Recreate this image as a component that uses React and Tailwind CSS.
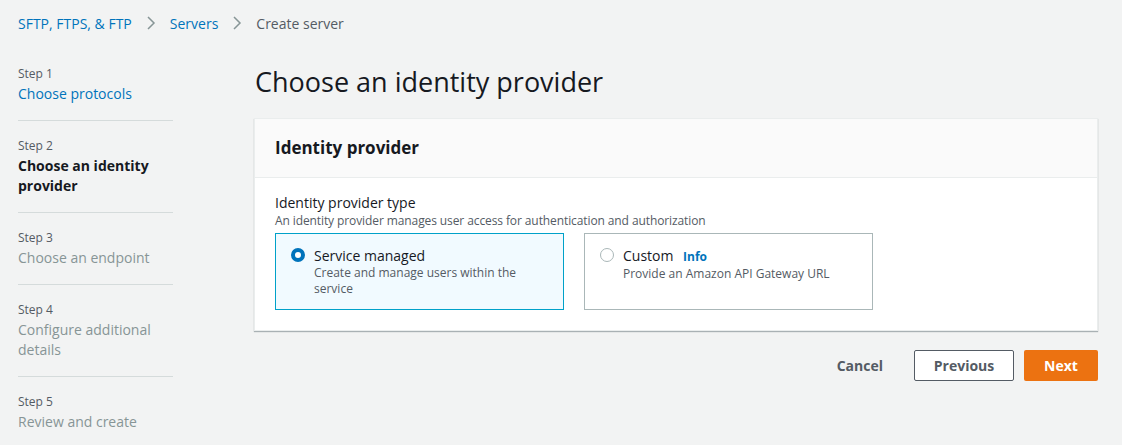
export default function App() {
  const steps = [
    { n: 1, title: "Choose protocols", state: "done" },
    { n: 2, title: "Choose an identity provider", state: "current" },
    { n: 3, title: "Choose an endpoint", state: "todo" },
    { n: 4, title: "Configure additional details", state: "todo" },
    { n: 5, title: "Review and create", state: "todo" },
  ];

  return (
    <div
      className="w-[1122px] h-[445px] bg-[#f2f3f3] text-[#16191f] overflow-hidden"
      style={{ fontFamily: '"Open Sans", "Noto Sans", Arial, sans-serif' }}
    >
      {/* breadcrumb */}
      <div className="flex items-center h-[46px] px-[18px] text-[14px]">
        <span className="text-[#0073bb]">SFTP, FTPS, &amp; FTP</span>
        <Chevron />
        <span className="text-[#0073bb]">Servers</span>
        <Chevron />
        <span className="text-[#545b64]">Create server</span>
      </div>

      <div className="flex">
        {/* steps */}
        <div className="w-[155px] ml-[18px] mt-[20px] shrink-0">
          {steps.map((s, i) => (
            <div
              key={s.n}
              className={`${i > 0 ? "border-t border-[#d5dbdb] pt-[17px]" : ""} ${
                i < steps.length - 1 ? "pb-[16px]" : ""
              }`}
            >
              <div className="text-[12px] leading-[16px] text-[#545b64]">Step {s.n}</div>
              <div
                className={`text-[14px] leading-[20px] mt-[2px] ${
                  s.state === "done"
                    ? "text-[#0073bb]"
                    : s.state === "current"
                    ? "font-bold text-[#16191f]"
                    : "text-[#879596]"
                }`}
              >
                {s.title}
              </div>
            </div>
          ))}
        </div>

        {/* main */}
        <div className="ml-[81px] w-[844px]">
          <h1 className="text-[27px] leading-[36px] mt-[18px] pl-[1px]">Choose an identity provider</h1>

          <div className="mt-[18px] bg-white border border-[#eaeded] shadow-[0_1px_1px_0_rgba(0,28,36,0.3)]">
            <div className="h-[59px] bg-[#fafafa] border-b border-[#eaeded] flex items-center px-[20px]">
              <h2 className="text-[17px] font-bold">Identity provider</h2>
            </div>
            <div className="px-[20px] pt-[16px] pb-[20px]">
              <div className="text-[14px] leading-[18px]">Identity provider type</div>
              <div className="text-[12px] leading-[16px] text-[#545b64] mt-[1px] tracking-[-0.1px]">
                An identity provider manages user access for authentication and authorization
              </div>
              <div className="flex gap-[20px] mt-[4px]">
                <div className="w-[289px] h-[77px] border border-[#00a1c9] bg-[#f1faff] flex pt-[13px] pl-[15px]">
                  <Radio checked />
                  <div className="ml-[9px]">
                    <div className="text-[14px] leading-[17px]">Service managed</div>
                    <div className="text-[12px] leading-[16px] text-[#545b64] mt-[1px] w-[220px]">
                      Create and manage users within the service
                    </div>
                  </div>
                </div>
                <div className="w-[289px] h-[77px] border border-[#aab7b8] bg-white flex pt-[13px] pl-[15px]">
                  <Radio />
                  <div className="ml-[9px]">
                    <div className="text-[14px] leading-[17px]">
                      Custom <span className="ml-[6px] text-[12px] font-bold text-[#0073bb]">Info</span>
                    </div>
                    <div className="text-[12px] leading-[16px] text-[#545b64] mt-[1px]">
                      Provide an Amazon API Gateway URL
                    </div>
                  </div>
                </div>
              </div>
            </div>
          </div>

          <div className="flex justify-end items-center mt-[19px] text-[14px] font-bold">
            <span className="text-[#545b64] mr-[31px]">Cancel</span>
            <button className="w-[100px] h-[31px] border border-[#545b64] bg-white text-[#545b64] rounded-[2px]">
              Previous
            </button>
            <button className="w-[74px] h-[31px] ml-[10px] bg-[#ec7211] text-white rounded-[2px]">
              Next
            </button>
          </div>
        </div>
      </div>
    </div>
  );
}

function Chevron() {
  return (
    <svg width="16" height="16" viewBox="0 0 16 16" className="mx-[11px]" fill="none">
      <path d="M5 2l6 6-6 6" stroke="#879596" strokeWidth="1.5" />
    </svg>
  );
}

function Radio({ checked }) {
  return (
    <div
      className={`mt-[1px] w-[14px] h-[14px] rounded-full shrink-0 ${
        checked ? "border-[4px] border-[#0073bb] bg-white" : "border border-[#aab7b8] bg-white"
      }`}
    />
  );
}
